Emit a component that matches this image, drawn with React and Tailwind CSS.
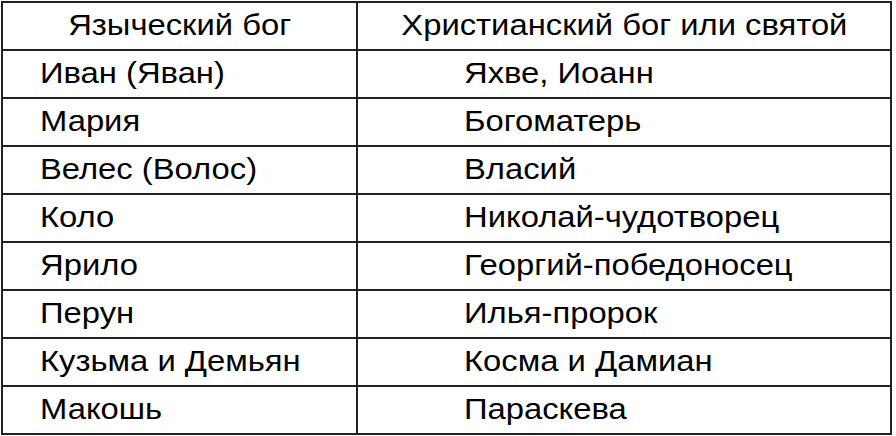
const rows = [
  ["Иван (Яван)", "Яхве, Иоанн"],
  ["Мария", "Богоматерь"],
  ["Велес (Волос)", "Власий"],
  ["Коло", "Николай-чудотворец"],
  ["Ярило", "Георгий-победоносец"],
  ["Перун", "Илья-пророк"],
  ["Кузьма и Демьян", "Косма и Дамиан"],
  ["Макошь", "Параскева"],
];

export default function App() {
  return (
    <div className="w-[896px] h-[436px] bg-white pt-[1px] pl-[1px] font-['Liberation_Sans',Arial,sans-serif] text-black">
      <div className="w-[891px] border-2 border-[#222]">
        {/* Header */}
        <div className="flex h-[48px] border-b-2 border-[#222] text-[29px]">
          <div className="w-[355px] border-r-2 border-[#222] flex items-center justify-center">
            <span className="inline-block scale-x-[1.13] origin-center">Языческий бог</span>
          </div>
          <div className="flex-1 flex items-center justify-center">
            <span className="inline-block scale-x-[1.13] origin-center">Христианский бог или святой</span>
          </div>
        </div>
        {rows.map(([a, b], i) => (
          <div
            key={i}
            className={
              i === rows.length - 1
                ? "flex h-[46px] text-[29px]"
                : "flex h-[48px] border-b-2 border-[#222] text-[29px]"
            }
          >
            <div className="w-[355px] border-r-2 border-[#222] flex items-center pl-[37px]">
              <span className="inline-block scale-x-[1.13] origin-left">{a}</span>
            </div>
            <div className="flex-1 flex items-center pl-[106px]">
              <span className="inline-block scale-x-[1.13] origin-left">{b}</span>
            </div>
          </div>
        ))}
      </div>
    </div>
  );
}
